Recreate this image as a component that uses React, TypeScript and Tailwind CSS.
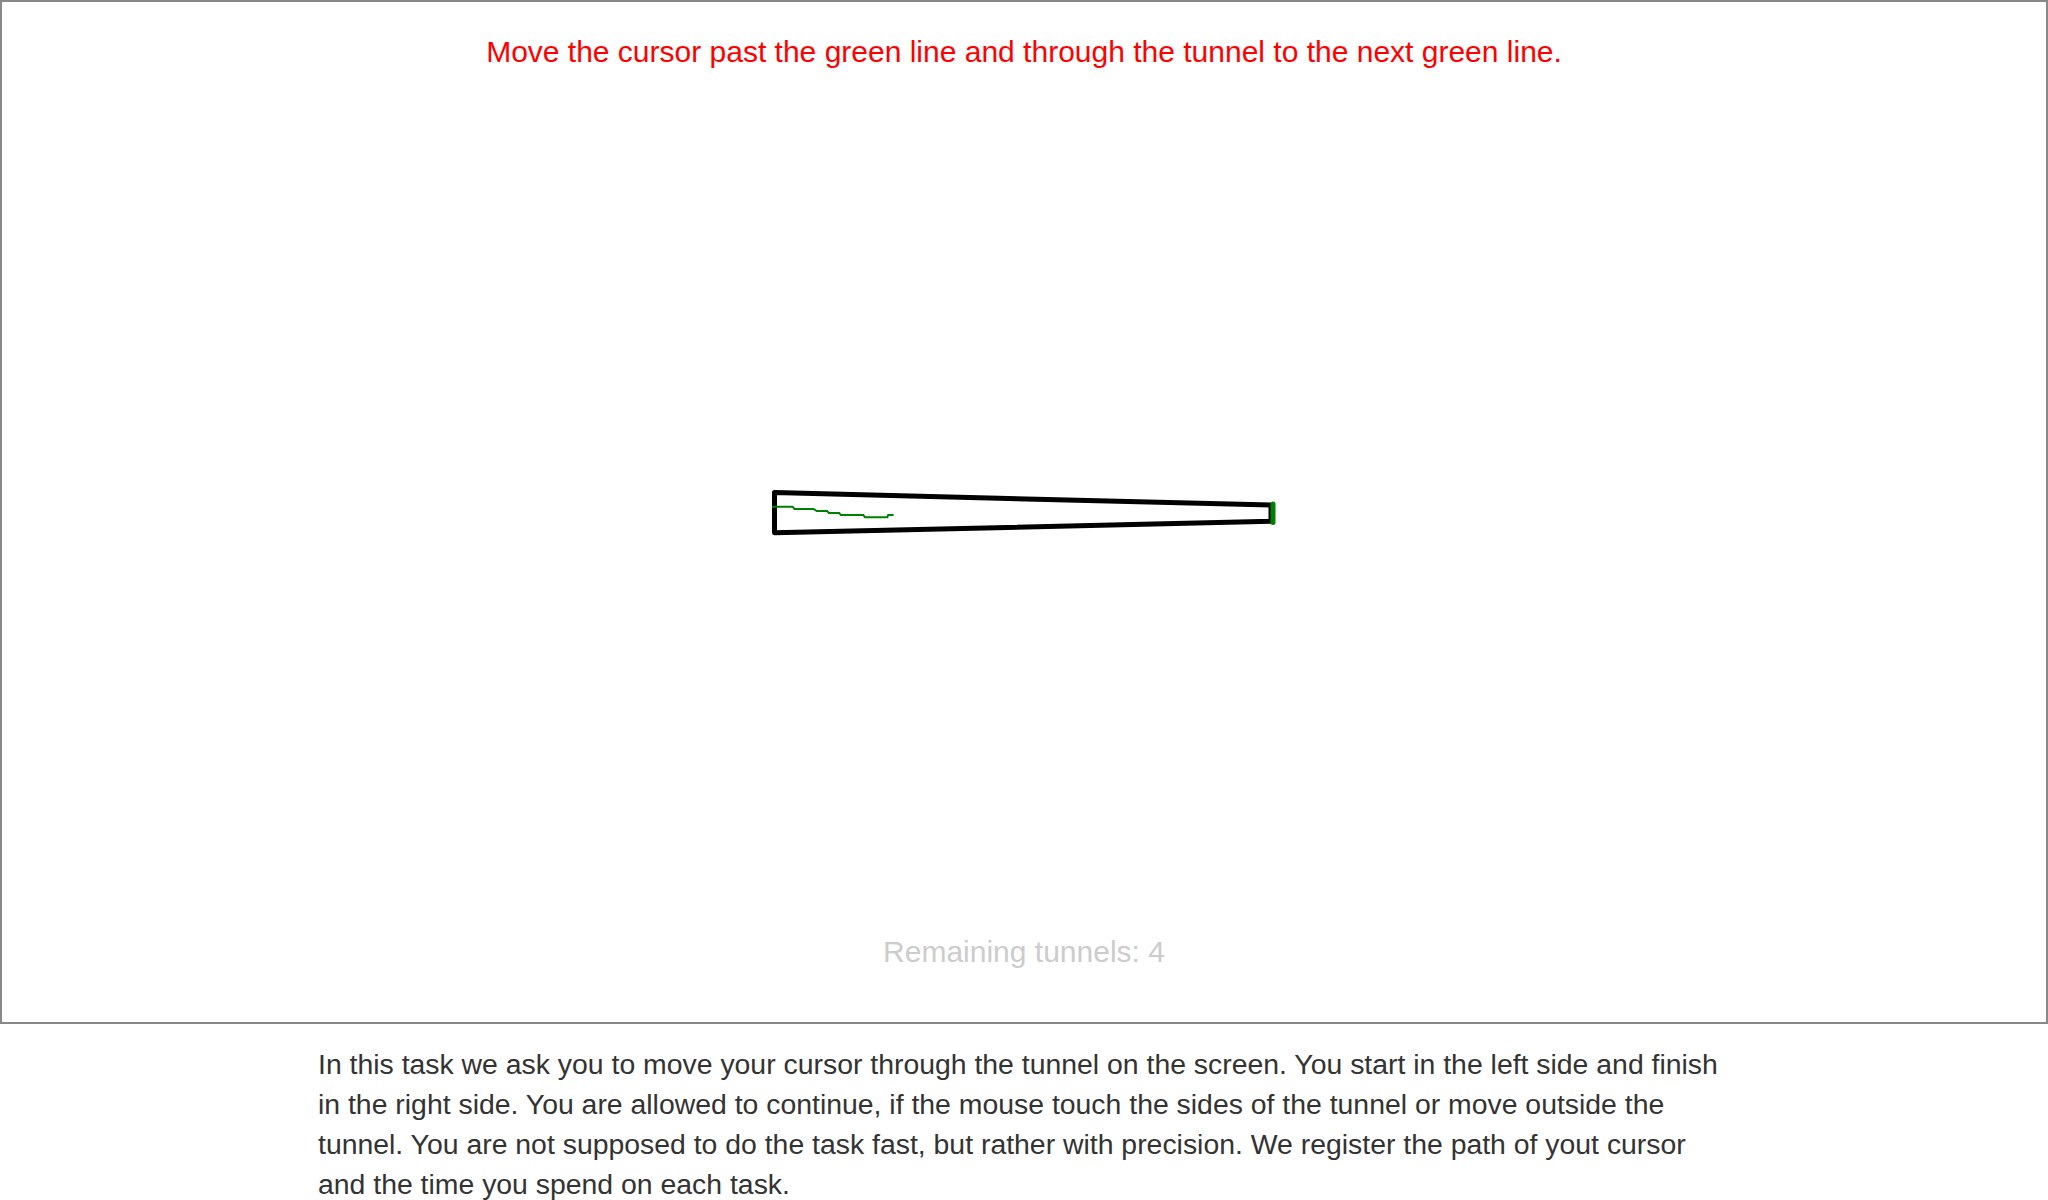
import React from "react";

const trail: [number, number][] = [
  [772, 506.8], [792.7, 506.8], [794.4, 508.9], [813.4, 508.9], [816.8, 511], [827.1, 511],
  [828.9, 513], [839.2, 513], [840.9, 515.1], [863.3, 515.1], [865, 517.2], [887.4, 517.2],
  [888.1, 515.1], [893.6, 515.1],
];

export default function App() {
  return (
    <div className="w-[2048px] bg-white" style={{ fontFamily: '"Liberation Sans", Arial, sans-serif' }}>
      <div className="relative box-border flex h-[1024px] w-full flex-col border-2 border-[#888888]">
        <svg className="pointer-events-none absolute left-[-2px] top-[-2px]" width="2048" height="1024" viewBox="0 0 2048 1024">
          <polygon points="774.5,492.6 1271,505 1271,521.3 774.5,532.8" fill="none" stroke="#000" strokeWidth="5" strokeLinejoin="round" />
          <line x1="1273" y1="504" x2="1273" y2="522.5" stroke="#008000" strokeWidth="5" strokeLinecap="round" />
          <polyline points={trail.map((p) => p.join(",")).join(" ")} fill="none" stroke="#008000" strokeWidth="2" />
        </svg>
        <p className="pt-[32px] text-center text-[30px] leading-[36px] text-[#ff0000]">
          Move the cursor past the green line and through the tunnel to the next green line.
        </p>
        <div className="flex-1" />
        <p className="pb-[52px] text-center text-[30px] leading-[36px] text-[#cccccc]">Remaining tunnels: 4</p>
      </div>
      <div className="mx-auto w-[1420px] translate-x-[4px] pt-[20px] text-[28.4px] leading-[40px] text-[#333333]">
        In this task we ask you to move your cursor through the tunnel on the screen. You start in the left side and finish in the right side. You are allowed to continue, if the mouse touch the sides of the tunnel or move outside the tunnel. You are not supposed to do the task fast, but rather with precision. We register the path of yout cursor and the time you spend on each task.
      </div>
    </div>
  );
}
